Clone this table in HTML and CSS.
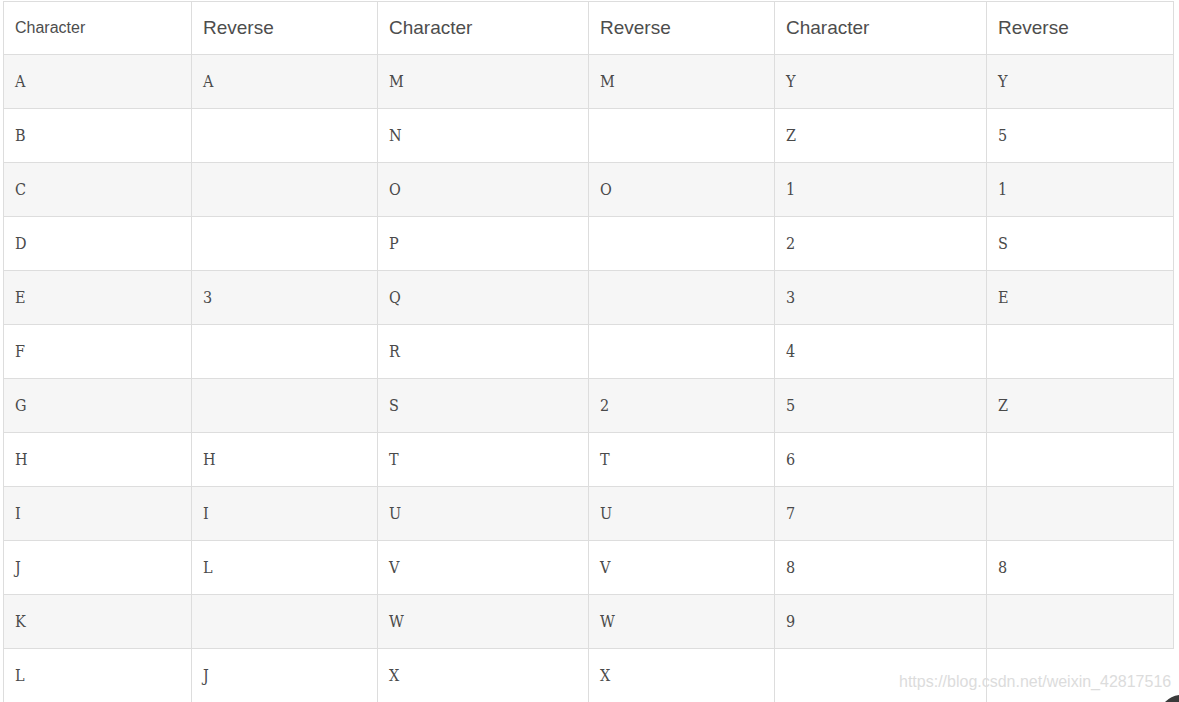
FILE: index.html
```html
<!DOCTYPE html>
<html>
<head>
<meta charset="utf-8">
<link rel="stylesheet" href="styles.css">
</head>
<body>
<div class="wrap">
<table class="map">
<colgroup>
<col class="c1"><col class="c2"><col class="c3"><col class="c4"><col class="c5"><col class="c6">
</colgroup>
<thead>
<tr><th class="small">Character</th><th>Reverse</th><th>Character</th><th>Reverse</th><th>Character</th><th>Reverse</th></tr>
</thead>
<tbody>
<tr><td>A</td><td>A</td><td>M</td><td>M</td><td>Y</td><td>Y</td></tr>
<tr><td>B</td><td></td><td>N</td><td></td><td>Z</td><td>5</td></tr>
<tr><td>C</td><td></td><td>O</td><td>O</td><td>1</td><td>1</td></tr>
<tr><td>D</td><td></td><td>P</td><td></td><td>2</td><td>S</td></tr>
<tr><td>E</td><td>3</td><td>Q</td><td></td><td>3</td><td>E</td></tr>
<tr><td>F</td><td></td><td>R</td><td></td><td>4</td><td></td></tr>
<tr><td>G</td><td></td><td>S</td><td>2</td><td>5</td><td>Z</td></tr>
<tr><td>H</td><td>H</td><td>T</td><td>T</td><td>6</td><td></td></tr>
<tr><td>I</td><td>I</td><td>U</td><td>U</td><td>7</td><td></td></tr>
<tr><td>J</td><td>L</td><td>V</td><td>V</td><td>8</td><td>8</td></tr>
<tr><td>K</td><td></td><td>W</td><td>W</td><td>9</td><td></td></tr>
<tr class="last"><td>L</td><td>J</td><td>X</td><td>X</td><td></td></tr>
</tbody>
</table>
<div class="watermark">https://blog.csdn.net/weixin_42817516</div>
<svg class="corner" width="14" height="10" viewBox="0 0 14 10"><path d="M0 10 Q6 4 14 3 L14 10 Z" fill="#3a3a3a"/></svg>
</div>
</body>
</html>
```
FILE: styles.css
```css
html, body {
  margin: 0;
  padding: 0;
  background: #fff;
}
.wrap {
  position: relative;
  width: 1179px;
  height: 702px;
  overflow: hidden;
  padding: 1px 0 0 3px;
  box-sizing: border-box;
}
.map {
  border-collapse: collapse;
  table-layout: fixed;
  width: 1170px;
}
.c1 { width: 188px; }
.c2 { width: 186px; }
.c3 { width: 211px; }
.c4 { width: 186px; }
.c5 { width: 212px; }
.c6 { width: 187px; }
.map th, .map td {
  border: 1px solid #dddddd;
  height: 54px;
  padding: 0 0 0 11px;
  box-sizing: border-box;
  text-align: left;
  vertical-align: middle;
}
.map th {
  height: 53px;
  font-family: "Liberation Sans", Arial, sans-serif;
  font-weight: normal;
  font-size: 19px;
  color: #4d4d4d;
}
.map th.small {
  font-size: 16px;
}
.map td {
  font-family: "DejaVu Serif", serif;
  font-stretch: condensed;
  font-size: 16px;
  color: #4a4a4a;
}
.map tbody tr:nth-child(odd) td {
  background: #f6f6f6;
}
.watermark {
  position: absolute;
  left: 899px;
  top: 673px;
  font-family: "Liberation Sans", Arial, sans-serif;
  font-size: 16px;
  color: #dcdcdc;
  white-space: nowrap;
}
.corner {
  position: absolute;
  right: 0;
  bottom: 0;
}
```
